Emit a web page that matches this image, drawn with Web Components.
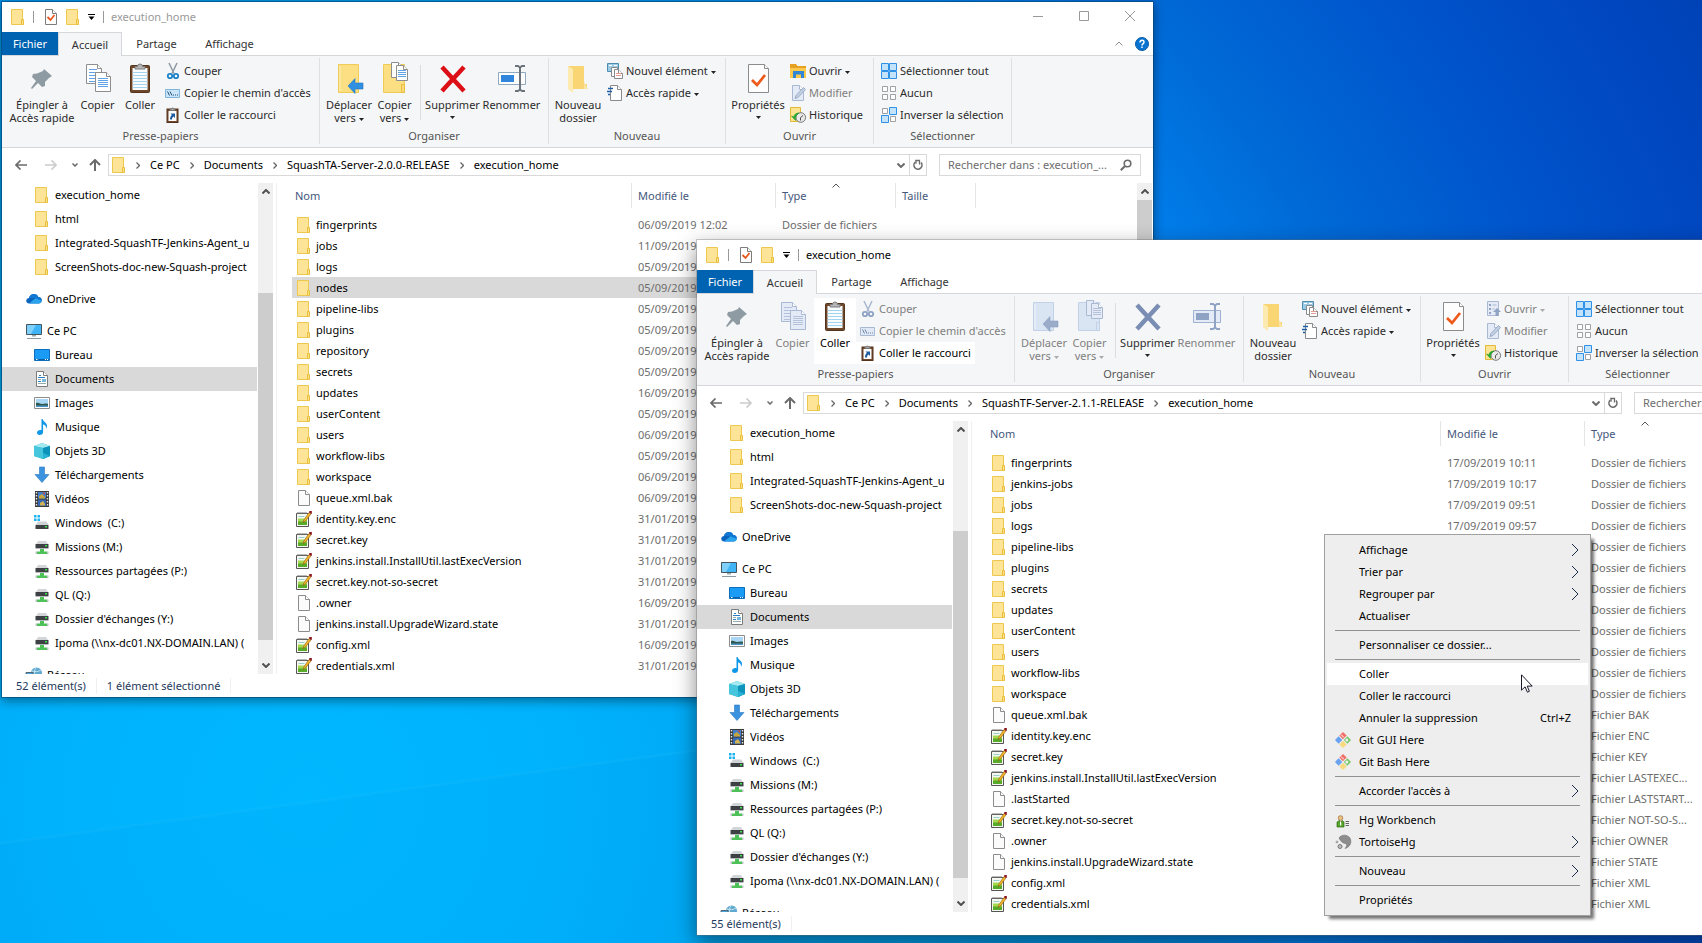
<!DOCTYPE html>
<html lang="fr">
<head>
<meta charset="utf-8">
<title>execution_home</title>
<style>
html, body { margin: 0; height: 100%; overflow: hidden; }
body { font: 11px/16px "Noto Sans", "Open Sans", sans-serif; color: #000; cursor: default; }
</style>
</head>
<body>
<desk-top>
  <explorer-window class="back" heading="execution_home">
    <ribbon-bar></ribbon-bar>
    <address-bar path="Ce PC|Documents|SquashTA-Server-2.0.0-RELEASE|execution_home"></address-bar>
    <nav-tree slot="side"></nav-tree>
    <file-list slot="main" folder="server200"></file-list>
    <status-bar slot="status"><span>52 élément(s)</span><span>1 élément sélectionné</span></status-bar>
  </explorer-window>
  <explorer-window class="front" heading="execution_home" active>
    <ribbon-bar clipboard></ribbon-bar>
    <address-bar path="Ce PC|Documents|SquashTF-Server-2.1.1-RELEASE|execution_home"></address-bar>
    <nav-tree slot="side"></nav-tree>
    <file-list slot="main" folder="server211" wide></file-list>
    <status-bar slot="status"><span>55 élément(s)</span></status-bar>
  </explorer-window>
  <context-menu>
    <menu-item more>Affichage</menu-item>
    <menu-item more>Trier par</menu-item>
    <menu-item more>Regrouper par</menu-item>
    <menu-item>Actualiser</menu-item>
    <hr>
    <menu-item>Personnaliser ce dossier...</menu-item>
    <hr>
    <menu-item hot>Coller</menu-item>
    <menu-item>Coller le raccourci</menu-item>
    <menu-item keys="Ctrl+Z">Annuler la suppression</menu-item>
    <menu-item icon="git">Git GUI Here</menu-item>
    <menu-item icon="git">Git Bash Here</menu-item>
    <hr>
    <menu-item more>Accorder l'accès à</menu-item>
    <hr>
    <menu-item icon="hg">Hg Workbench</menu-item>
    <menu-item icon="tortoise" more>TortoiseHg</menu-item>
    <hr>
    <menu-item more>Nouveau</menu-item>
    <hr>
    <menu-item>Propriétés</menu-item>
  </context-menu>
  <mouse-pointer></mouse-pointer>
</desk-top>

<script>
/* Registers an element whose shadow root is cloned from a template made of css and markup. */
function element(name, css, markup) {
  customElements.define(name, class extends HTMLElement {
    connectedCallback() {
      if (this.shadowRoot) return;
      const t = document.createElement('template');
      t.innerHTML = `<style>:host,*{box-sizing:border-box}button{font:inherit;color:inherit;background:none;border:0;padding:0;margin:0}${css}</style>` +
        (typeof markup === 'function' ? markup(this) : markup);
      this.attachShadow({ mode: 'open' }).append(t.content.cloneNode(true));
    }
  });
}

/* ---------- icons ---------- */
const page = (x, y, w, h, line, fill) =>
  `<path d="M${x + .5} ${y + .5}h${w - 5}l4 4v${h - 5}h${-(w - 1)}z" fill="${fill}" stroke="${line}"/><path d="M${x + w - 4.5} ${y + .5}v4h4" fill="#fff" stroke="${line}"/>`;
const lines = (x, y, w, n, step, c) =>
  `<path d="${Array.from({ length: n }, (_, i) => `M${x} ${y + i * step + .5}h${w}`).join('')}" stroke="${c}" fill="none"/>`;
const squares = (kinds) => kinds.split('').map((k, i) => {
  const x = (i % 2) * 8, y = (i >> 1) * 8;
  return k === '1'
    ? `<path d="M${x + .5} ${y + .5}h7v7h-7z" fill="#c3e3fc" stroke="#2f91e5"/>`
    : `<path d="M${x + 1.5} ${y + 1.5}h5v5h-5z" fill="#fff" stroke="#a0a0a0"/>`;
}).join('');
const clipboard = `<rect x="6.5" y="3.500" width="19" height="27" rx="1" fill="#6f472b" stroke="#54331c"/><path d="M8.500 6h15v22h-15z" fill="#fafdff"/>${lines(8.5, 10, 15, 6, 3, '#a3d4ee')}<path d="M11 7V4.500h2.500a2.500 2.500 0 0 1 5 0H21V7z" fill="#b6b6b6" stroke="#7d7d7d"/>`;
const netdrive = `<path d="M4 2h8l2 3H2z" fill="#d3d6d8"/><path d="M1.500 5h13v4h-13z" fill="#3d4144"/><path d="M11 6h2v1.500h-2z" fill="#3fe04a"/><path d="M1.500 9h13v1h-13z" fill="#b6babd"/><path d="M6 10h4v2.500h3V15H3v-2.500h3z" fill="#4ec258"/><path d="M1.500 12.500H3V15H1.500zM13 12.500h1.500V15H13z" fill="#bfc4c7"/>`;

const ICONS = {
  folder: () => `<path d="M1.500 .5h11v15h-11z" fill="#fee496" stroke="#ecc850"/><path d="M11.500 10.500h2v5h-2z" fill="#fde08a" stroke="#e8bf3c"/>`,
  check: () => page(2, 0, 12, 16, '#7c7c7c', '#fff') + `<path d="M4.500 8l3 3 4-5" fill="none" stroke="#e8571d" stroke-width="1.800"/>`,
  file: () => page(2, 0, 12, 16, '#8c8c8c', '#fbfbfb'),
  npp: () => `<path d="M.5 2.500h12V15.500H.5z" fill="#f4f8f1" stroke="#555"/><path d="M2 7.500h9V14H2z" fill="#a5d84c"/><path d="M2 10.500h9V14H2z" fill="#58ab28"/><path d="M2.500 5.500h6" stroke="#9cc"/><path d="M2 1v2M4 1v2M6 1v2M8 1v2M10 1v2" stroke="#777"/><path d="M7 11.500l.8-2.500 5.200-7.500 2 1.500-5.500 7z" fill="#f4b62a" stroke="#8a5a12" stroke-width=".6"/><path d="M13.300 0h2.500v3l-1-.2-1.700-1.300z" fill="#8b1620"/>`,
  cloud: () => `<path d="M3.500 12.500C1 12.500 0 11 .3 9.300.6 7.700 2 7 3 7c.6-2.500 2.600-4 5-4 2 0 3.600 1 4.300 3 2.200 0 3.500 1.500 3.500 3.300 0 2-1.300 3.200-3.200 3.200z" fill="#0a64bd"/><path d="M8 3c2 0 3.600 1 4.300 3 2.200 0 3.500 1.500 3.500 3.300L9 7 3 7c.6-2.500 2.600-4 5-4z" fill="#1277d3"/><path d="M3 12.500l6.500-5.300 6.300 2.500c-.2 1.700-1.400 2.800-3.200 2.800z" fill="#2aa4ec"/>`,
  pc: () => `<path d="M.5 1.500h15v10H.5z" fill="#3fb4f7" stroke="#45555f"/><path d="M1 2h9L5 11H1z" fill="#7fd0fb"/><path d="M6 12h4v1.500H6z" fill="#9aa"/><path d="M1 15.500h14" stroke="#8b9aa3"/>`,
  desktop: () => `<path d="M.5 2.500h15v11H.5z" fill="#1a9bf5" stroke="#0d6fbd"/><path d="M1 12.500h14" stroke="#0a5fa8"/><path d="M2 12.500h1.500M11 12.500h1M13 12.500h1" stroke="#fff"/>`,
  docs: () => page(2, 0, 12, 16, '#7c7c7c', '#fff') + `<path d="M5 4.500h2M4 6.500h7M9 8.500h3M4 10.500h3" stroke="#2d7fc4"/><path d="M8 8h4v3H8z" fill="#79b8dd"/><path d="M4 8.500h3M4 12.500h8" stroke="#9aa"/>`,
  images: () => `<path d="M.5 2.500h15v11H.5z" fill="#fff" stroke="#8c8c8c"/><path d="M2 4h12v8H2z" fill="#a8d6f4"/><path d="M2 8c3-1 4 1 6 1s4-1 6 0v3H2z" fill="#31584f"/><path d="M2 10.500h12V12H2z" fill="#4b93c4"/>`,
  music: () => `<path d="M7.500 0h1.200c.3 3 4.300 3.500 4.300 7 0 1.300-.5 2-1 2.700.3-2.700-1-3.700-2.900-4.500V13c0 1.700-1.500 3-3.500 3C3.900 16 3 15 3 13.800c0-1.600 1.500-2.800 3.300-2.800.5 0 .9.100 1.200.2z" fill="#0f97e8"/>`,
  cube: () => `<path d="M0 3l8-3 8 3v10l-7 3-9-3z" fill="#2bb5cf"/><path d="M0 3l8-3 8 3-7 2z" fill="#a6e8f0"/><path d="M0 3l9 2v11l-9-3z" fill="#46c6dc"/><path d="M9 5l7-2v10l-7 3z" fill="#0e93ba"/><path d="M9 10l7 3-7 3z" fill="#27b3d4"/>`,
  download: () => `<path d="M5.500 0h5v7.500H15L8 15.500 1 7.500h4.500z" fill="#3b93e0" stroke="#2a78c0" stroke-width=".6"/>`,
  video: () => `<path d="M1 0h14v16H1z" fill="#3b3b3b"/><path d="M2.500 1v15M13.500 1v15" stroke="#e6e6e6" stroke-width="1.400" stroke-dasharray="1.500 1.500"/><path d="M4 1h8v6.500H4z" fill="#3f7fd0"/><path d="M4 8.500h8V15H4z" fill="#3567b5"/><path d="M5 5l3-2 3 3v1.500H5z" fill="#caa53a"/><path d="M8 1.500h3V4z" fill="#c24d3a"/><path d="M6 12l3-2 2 3v1.500H6z" fill="#d3b450"/>`,
  windrive: () => `<path d="M0 0h2.500v2.500H0zM3.500 0H6v2.500H3.500zM0 3.500h2.500V6H0zM3.500 3.500H6V6H3.500z" fill="#18b3f0"/><path d="M4 6.500h8.500l2 3.500H1.500z" fill="#cfd3d6"/><path d="M1.500 10h13v4h-13z" fill="#3d4144"/><path d="M11 11h2v1.500h-2z" fill="#3fe04a"/>`,
  netdrive: () => netdrive,
  network: () => `<circle cx="10.500" cy="6" r="5.500" fill="#5fa9cf"/><path d="M10 1c-2 2-2 6-1 9M6 4c3 1 6 1 9-1" stroke="#c6e4f1" fill="none"/><path d="M0 5.500h7V12H0z" fill="#4aa3d8" stroke="#567"/>`,
  /* ribbon, 16 px */
  cut: o => { const b = o ? '#a9b7cf' : '#8d99a3', h = o ? '#8fa3c4' : '#1d84c8'; return `<path d="M4 0l5 10.500M12 0L7 10.500" stroke="${b}" stroke-width="1.500" fill="none"/><ellipse cx="5" cy="13" rx="2.200" ry="2.200" fill="none" stroke="${h}" stroke-width="1.800"/><ellipse cx="11" cy="13" rx="2.200" ry="2.200" fill="none" stroke="${h}" stroke-width="1.800"/>`; },
  path: o => `<path d="M.5 4.500h14v8H.5z" fill="${o ? '#dfe8f4' : '#cbe5f8'}" stroke="${o ? '#a9b9d4' : '#7fb5dc'}"/><path d="M2.500 6.500l2 4M5 6.500l2 4M8 10h1M10 10h1M12 10h1" stroke="${o ? '#7085ab' : '#23527c'}" fill="none"/>`,
  link: () => `<rect x="2" y="2" width="11" height="13.500" fill="#6f472b" stroke="#54331c"/><path d="M3.500 4H11.500V14h-8z" fill="#fff"/><path d="M5 3.500V2h1.500a1 1 0 0 1 2 0H10v1.500z" fill="#aaa" stroke="#777"/><path d="M5 12.500c0-2 .5-3.500 2-4.500L5.500 6.500H10V11L8.500 9.500C7.500 10.200 7 11 7 12.500z" fill="#1d5a9e"/>`,
  newitem: () => `<path d="M.5 .5h11v8H.5z" fill="#9ccbe6" stroke="#4f8cae"/><path d="M2 2.500h3M7 2.500h3" stroke="#fff"/><path d="M4.500 4.500h6v9h-6z" fill="#fff" stroke="#8a8a8a"/>` + page(7, 6, 9, 10, '#8a8a8a', '#fff') + lines(9, 10, 5, 2, 2, '#e59a92'),
  quick: () => page(3, 0, 12, 16, '#8a8a8a', '#fff') + `<path d="M1 3.500h5M0 6.500h5M1 9.500h2" stroke="#1d5fa8" stroke-width="1.500"/>`,
  openf: () => `<path d="M0 1h6l1.500 2H16v12H0z" fill="#e6a122"/><path d="M0 5h16v10H0z" fill="#fbc94b"/><path d="M3 8h11v7h-3v-3.500H6V15H3z" fill="#2f86d6"/>`,
  openlist: () => `<path d="M2.500 .5h11v14h-11z" fill="#e4ebf6" stroke="#a9b9d4"/><path d="M4 3h2v2H4zM4 7h2v2H4zM4 11h2v2H4z" fill="#8fa3c4"/><path d="M7.500 4h4M7.500 8h2" stroke="#a9b9d4"/><path d="M12 7l4 4h-2.500v4h-3v-4H8z" fill="#8fa3c4"/>`,
  edit: () => page(2, 0, 12, 16, '#a9b9d4', '#e4ebf6') + `<path d="M5 13.500l1-3 7.500-8 2 2-7.500 8z" fill="#c3cfe3" stroke="#9aacca"/>`,
  history: () => `<path d="M.5 .5h10v14H.5z" fill="#fee392" stroke="#e3b93a"/><circle cx="10.800" cy="10.500" r="4.800" fill="#e9e9e9" stroke="#777"/><path d="M10.500 10.500l2.500-2M10.500 10.500v3" stroke="#555"/><path d="M1.500 9l4 4.500v-2c0-2.500 1-4 3.500-5.500-3 0-5 1.500-5 4z" fill="#23b431" stroke="#128a20" stroke-width=".5"/>`,
  selall: () => squares('1111'),
  selnone: () => squares('0000'),
  selinv: () => squares('0110'),
  /* ribbon, 32 px */
  pin: () => `<path d="M18 7l8 7-3 2-4 4v4l-3 1-4-4-6 6-1-1 5-7-4-4 1-3 4-.5L17 9z" fill="#8f9ba3"/>`,
  copy: o => { const l = o ? '#a9b9d4' : '#8e8e8e', f = o ? '#e4ebf6' : '#fff', t = o ? '#b3c1da' : '#5fa3e6'; return page(4, 2, 16, 20, l, f) + lines(7, 7, 8, 5, 3, t) + page(13, 10, 16, 20, l, f) + lines(16, 16, 10, 5, 2, t); },
  paste: () => clipboard,
  moveto: o => `<path d="M5.500 2.500h20v28h-20z" fill="${o ? '#dae5f4' : '#fddf83'}" stroke="${o ? '#c2d1e8' : '#efcb58'}"/><path d="M7 4v25" stroke="${o ? '#edf3fb' : '#fff0bb'}"/><path d="M15 24l7-7.500v4.500h8v6h-8v4.500z" fill="${o ? '#9aacca' : '#2f8fe0'}" stroke="${o ? '#8fa3c4' : '#2377c2'}" stroke-width=".6"/>`,
  copyto: o => { const l = o ? '#a9b9d4' : '#8e8e8e', f = o ? '#e4ebf6' : '#fff', t = o ? '#b3c1da' : '#5fa3e6'; return `<path d="M4.500 2.500h21v28h-21z" fill="${o ? '#dae5f4' : '#fddf83'}" stroke="${o ? '#c2d1e8' : '#efcb58'}"/><path d="M22.500 22.500h3v8h-3z" fill="${o ? '#dae5f4' : '#fbd976'}" stroke="${o ? '#c2d1e8' : '#e8bf3c'}"/>` + page(12, 0, 12, 16, l, f) + page(17, 3, 12, 16, l, f) + lines(19, 8, 8, 4, 2, t); },
  del: o => `<path d="M5 5l22 24M27 5L5 29" stroke="${o ? '#7a8db3' : '#dc0f17'}" stroke-width="4.500"/>`,
  rename: o => `<path d="M2.500 10.500h27v12h-27z" fill="${o ? '#e4ebf6' : '#fdfdfd'}" stroke="${o ? '#9fb2d4' : '#8fa9c0'}"/><path d="M5 13h13v7H5z" fill="${o ? '#8fa3c4' : '#2f86dc'}"/><path d="M19 4h3l2 1.500L26 4h3M19 29h3l2-1.500 2 1.500h3M24 5v23" fill="none" stroke="${o ? '#8fa3c4' : '#6b747c'}" stroke-width="2"/>`,
  newfolder: () => `<path d="M6 4h16v18h3v5H11z" fill="#f9d573"/><path d="M22 20l4 7h-4z" fill="#fbe4a2"/><path d="M6 4l5 3v24l-5-4z" fill="#fdeab0"/>`,
  props: () => page(6, 2, 21, 29, '#8c8c8c', '#fdfdfd') + `<path d="M10 18l5 5 8-10" fill="none" stroke="#ee5a1c" stroke-width="2.800"/>`,
  /* context menu */
  git: () => `<g transform="rotate(45 8 8)"><path d="M2.300 2.300h5.200v5.200H2.300z" fill="#f0706a"/><path d="M8.500 2.300h5.200v5.200H8.500z" fill="#7bc86a"/><path d="M2.300 8.500h5.200v5.200H2.300z" fill="#6aa2f0"/><path d="M8.500 8.500h5.200v5.200H8.500z" fill="#f7da80"/></g><circle cx="11.800" cy="8" r="1.500" fill="#eee"/><path d="M6 2.500l3 3" stroke="#fff"/>`,
  hg: () => `<circle cx="5.500" cy="6" r="2.300" fill="#eac38c" stroke="#9c6d2a" stroke-width=".7"/><path d="M2 15v-5l2.500-1.500L5.500 11 7 8.500 9 10v5z" fill="#56a52c" stroke="#2e6b13" stroke-width=".7"/><path d="M5 10h1.200v3.500H5z" fill="#fff"/><path d="M10.500 9.500H14M10.500 11.500H14M10.500 13.500H14" stroke="#666"/>`,
  tortoise: () => `<path d="M4 4c2-3.500 8-4 11 0 2 4 .5 9-5 10.500 2-2 2-3.500 1-5C8 9.500 5.500 7.500 4 4z" fill="#8d8d8d" stroke="#6f6f6f" stroke-width=".6"/><circle cx="5" cy="12.500" r="2" fill="#bbb" stroke="#777"/><circle cx="2" cy="8" r="1" fill="#ccc" stroke="#888" stroke-width=".7"/>`,
};
element('fs-icon', `
:host{display:block;flex:none;width:16px;height:16px}
:host([big]){width:32px;height:32px}
svg{display:block;width:100%;height:100%;overflow:visible}`,
  e => `<svg viewBox="0 0 ${e.hasAttribute('big') ? '32 32' : '16 16'}" aria-hidden="true">${ICONS[e.getAttribute('name')](e.hasAttribute('off'))}</svg>`);

/* Line glyphs: chevrons, arrows, window controls. */
const GLYPHS = {
  down: [5, 3, '<path d="M0 0h5L2.500 3z" fill="currentColor"/>'],
  crumb: [4, 7, '<path d="M.5 .5l3 3-3 3" fill="none" stroke="currentColor" stroke-width="1.300"/>'],
  vee: [8, 5, '<path d="M.5 .5L4 4 7.500 .5" fill="none" stroke="currentColor" stroke-width="2"/>'],
  smallvee: [6, 4, '<path d="M.5 .5L3 3 5.500 .5" fill="none" stroke="currentColor" stroke-width="1.500"/>'],
  caret: [8, 5, '<path d="M.5 4.500L4 1l3.500 3.500" fill="none" stroke="currentColor"/>'],
  fatcaret: [8, 5, '<path d="M.5 4.500L4 1l3.500 3.500" fill="none" stroke="currentColor" stroke-width="2"/>'],
  left: [12, 10, '<path d="M5.500 .5L1 5l4.500 4.500M1 5h11" fill="none" stroke="currentColor" stroke-width="1.700"/>'],
  right: [12, 10, '<path d="M6.500 .5L11 5 6.500 9.500M11 5H0" fill="none" stroke="currentColor" stroke-width="1.700"/>'],
  up: [12, 12, '<path d="M1 6l5-5 5 5M6 1v11" fill="none" stroke="currentColor" stroke-width="2"/>'],
  reload: [10, 12, '<path d="M2.300 3.200A4 4 0 1 0 8 3.600" fill="none" stroke="currentColor" stroke-width="1.600"/><path d="M3 1v3.700M2.200 1.500H6.500V5.500" fill="none" stroke="currentColor" stroke-width="1.300"/>'],
  lens: [12, 12, '<circle cx="7.500" cy="4.500" r="3.300" fill="none" stroke="currentColor" stroke-width="1.600"/><path d="M5 7L.8 11.200" stroke="currentColor" stroke-width="2"/>'],
  min: [10, 10, '<path d="M0 5.500h10" stroke="currentColor"/>'],
  max: [10, 10, '<path d="M.5 .5h9v9h-9z" fill="none" stroke="currentColor"/>'],
  close: [10, 10, '<path d="M0 0l10 10M10 0L0 10" stroke="currentColor"/>'],
  more: [8, 14, '<path d="M1 1l6 6-6 6" fill="none" stroke="currentColor"/>'],
  bardown: [7, 6, '<path d="M0 .5h7" stroke="currentColor"/><path d="M.5 2.500h6l-3 3.500z" fill="currentColor"/>'],
};
const glyph = n => { const [w, h, p] = GLYPHS[n]; return `<svg class="g" width="${w}" height="${h}" viewBox="0 0 ${w} ${h}" aria-hidden="true">${p}</svg>`; };

/* ---------- desktop ---------- */
element('desk-top', `
:host{display:block;position:relative;height:100vh;overflow:hidden;
 background:radial-gradient(circle at 18% 85%,#00b8ff 0,#00b2fc 16%,#00a8f4 27%,#0093e2 50%,#007fec 63%,#006ad6 72%,#0054cc 84%,#0047c0 94%,#0042b6 100%)}
.ray{position:absolute;inset:0;width:100%;height:100%}
::slotted(explorer-window){position:absolute;width:calc(100vw - 549px);height:calc(100vh - 246px)}
::slotted(.back){left:1px;top:1px}
::slotted(.front){left:696px;top:239px}
::slotted(context-menu){position:absolute;left:1324px;top:534px}
::slotted(mouse-pointer){position:absolute;left:1521px;top:674px}`,
  `<svg class="ray" viewBox="0 0 1702 943" preserveAspectRatio="none" aria-hidden="true"><path d="M0 843L696 750V943H0z" fill="#0090d8" opacity=".06"/><path d="M0 842L696 749v3L0 845z" fill="#3cf" opacity=".12"/></svg><slot></slot>`);

element('explorer-window', `
:host{display:flex;flex-direction:column;border:1px solid rgba(0,60,100,.5);background:#fff;background-clip:padding-box;box-shadow:0 3px 10px rgba(0,0,0,.4)}
:host([active]){border-color:rgba(110,110,110,.35);box-shadow:0 8px 20px rgba(0,0,0,.45)}
header{flex:none;height:30px;display:flex;align-items:center;color:#999;padding-left:8px}
:host([active]) header{color:#000}
.bar{width:1px;height:12px;background:#999;margin:0 9px 0 7px}
.bar.end{margin:0 7px 0 8px}
fs-icon+fs-icon{margin-left:6px}
.pull{color:#000;margin-left:7px;display:flex;align-items:center;height:20px}
h1{font:inherit;margin:0;flex:1}
.ctl{width:46px;height:28px;display:grid;place-items:center;align-self:flex-start}
:host([active]) .ctl{color:#000}
main{flex:1;min-height:0;display:flex}
::slotted(nav-tree){flex:none}
::slotted(file-list){flex:1;min-width:0}`,
  e => `<header><fs-icon name="folder"></fs-icon><span class="bar"></span><fs-icon name="check"></fs-icon><fs-icon name="folder"></fs-icon><button class="pull" aria-label="Personnaliser">${glyph('bardown')}</button><span class="bar end"></span><h1>${e.getAttribute('heading')}</h1><button class="ctl" aria-label="Réduire">${glyph('min')}</button><button class="ctl" aria-label="Agrandir">${glyph('max')}</button><button class="ctl" aria-label="Fermer">${glyph('close')}</button></header><slot></slot><main><slot name="side"></slot><slot name="main"></slot></main><slot name="status"></slot>`);

/* ---------- ribbon ---------- */
element('ribbon-button', `
:host{display:block;flex:none}
button{display:flex;align-items:center;height:22px;padding:0 4px;gap:3px;white-space:nowrap;color:#2b2b2b;text-align:center}
:host([big]) button{flex-direction:column;width:100%;height:66px;padding:2px 0 0;gap:4px;line-height:13px}
:host([hot]) button{background:#fff;color:#000}
button:disabled{color:#808080}
.g{margin-left:3px;vertical-align:middle;color:#222}
button:disabled .g{color:#aaa}
:host([arrow=below]) .g{display:block;margin:5px auto 0}
b{font-weight:400}`,
  e => {
    const big = e.hasAttribute('big') ? 'big' : '', off = e.hasAttribute('off');
    return `<button ${off ? 'disabled' : ''}><fs-icon ${big} name="${e.getAttribute('icon')}" ${off || e.hasAttribute('dim') ? 'off' : ''}></fs-icon><b><slot></slot>${e.hasAttribute('arrow') ? glyph('down') : ''}</b></button>`;
  });

element('ribbon-group', `
:host{display:grid;grid-template-rows:68px 16px;row-gap:0;height:86px;margin-top:2px;padding-top:2px;border-right:1px solid #dfe0e2;flex:none}
div{display:flex;align-items:flex-start;padding-left:var(--lead,4px)}
footer{text-align:center;color:#555}`,
  e => `<div><slot></slot></div><footer>${e.getAttribute('label')}</footer>`);

element('ribbon-bar', `
:host{display:block;flex:none}
nav{display:flex;height:24px;border-bottom:1px solid #d5d7da}
nav button{height:24px;color:#333;display:block;text-align:center}
.file{width:56px;height:23px;background:#0063b1;color:#fff}
.on{width:64px;background:#f5f6f7;border:1px solid #d5d7da;border-bottom:0}
.t3{width:69px}.t4{width:77px}
.tools{margin-left:auto;display:flex;align-items:center;gap:12px;padding-right:4px;color:#8a8a8a}
.tools button{height:14px;display:grid;place-items:center;color:inherit}
.help{width:14px}
.strip{display:flex;height:92px;background:#f5f6f7;border-bottom:1px solid #d5d7da}
.col{display:flex;flex-direction:column;align-items:flex-start}
.line{width:1px;height:55px;margin:5px 4px 0 5px;background:#dcdde0}
.w68{width:68px}.w43{width:43px}.w42{width:42px}.w50{width:50px}.w41{width:41px}.w55{width:55px}.w63{width:63px}.w56{width:56px}
.g1{width:318px;--lead:6px}.g2{width:229px}.g3{width:177px}.g4{width:148px}.g5{width:138px;--lead:3px}`,
  e => {
    const c = e.hasAttribute('clipboard'), off = c ? 'off' : '', hot = c ? 'hot' : '';
    return `<nav><button class="file">Fichier</button><button class="on">Accueil</button><button class="t3">Partage</button><button class="t4">Affichage</button><span class="tools"><button aria-label="Réduire le ruban">${glyph('caret')}</button><button class="help" aria-label="Aide"><svg width="14" height="14" viewBox="0 0 14 14"><circle cx="7" cy="7" r="6.500" fill="#0873d0" stroke="#0a5ca8"/><path d="M5 5.500C5 4 6 3.300 7 3.300s2 .7 2 1.900c0 1.500-2 1.500-2 3.300M7 9.500V11" fill="none" stroke="#fff" stroke-width="1.500"/></svg></button></span></nav>
<div class="strip">
<ribbon-group class="g1" label="Presse-papiers">
 <ribbon-button big class="w68" icon="pin">Épingler à<br>Accès rapide</ribbon-button>
 <ribbon-button big class="w43" icon="copy" ${off}>Copier</ribbon-button>
 <ribbon-button big class="w42" icon="paste" ${hot}>Coller</ribbon-button>
 <span class="col"><ribbon-button icon="cut" ${off}>Couper</ribbon-button><ribbon-button icon="path" ${off}>Copier le chemin d'accès</ribbon-button><ribbon-button icon="link" ${hot}>Coller le raccourci</ribbon-button></span>
</ribbon-group>
<ribbon-group class="g2" label="Organiser">
 <ribbon-button big class="w50" icon="moveto" arrow ${off}>Déplacer<br>vers</ribbon-button>
 <ribbon-button big class="w41" icon="copyto" arrow ${off}>Copier<br>vers</ribbon-button>
 <span class="line"></span>
 <ribbon-button big class="w55" icon="del" arrow="below" ${c ? 'dim' : ''}>Supprimer</ribbon-button>
 <ribbon-button big class="w63" icon="rename" ${off}>Renommer</ribbon-button>
</ribbon-group>
<ribbon-group class="g3" label="Nouveau">
 <ribbon-button big class="w50" icon="newfolder">Nouveau<br>dossier</ribbon-button>
 <span class="col"><ribbon-button icon="newitem" arrow>Nouvel élément</ribbon-button><ribbon-button icon="quick" arrow>Accès rapide</ribbon-button></span>
</ribbon-group>
<ribbon-group class="g4" label="Ouvrir">
 <ribbon-button big class="w56" icon="props" arrow="below">Propriétés</ribbon-button>
 <span class="col"><ribbon-button icon="${c ? 'openlist' : 'openf'}" arrow ${off}>Ouvrir</ribbon-button><ribbon-button icon="edit" off>Modifier</ribbon-button><ribbon-button icon="history">Historique</ribbon-button></span>
</ribbon-group>
<ribbon-group class="g5" label="Sélectionner">
 <span class="col"><ribbon-button icon="selall">Sélectionner tout</ribbon-button><ribbon-button icon="selnone">Aucun</ribbon-button><ribbon-button icon="selinv">Inverser la sélection</ribbon-button></span>
</ribbon-group>
</div>`;
  });

/* ---------- address row ---------- */
element('address-bar', `
:host{display:flex;flex:none;height:35px;align-items:flex-start;padding:6px 12px 0 13px;color:#6b6b6b}
.nav{display:flex;align-items:center;height:22px;width:93px}
.nav button{display:grid;place-items:center;width:12px}
.nav .r{margin-left:18px;color:#ccc}
.nav .v{margin-left:12px}
.nav .u{margin-left:8px}
.path{flex:1;min-width:0;display:flex;align-items:center;height:22px;border:1px solid #d9d9d9;padding-left:2px;color:#000}
.path a{color:#000;text-decoration:none;white-space:nowrap}
.path i{width:24px;display:grid;place-items:center;color:#666}
fs-icon+i{margin-left:-1px}
.end{margin-left:auto;display:flex;height:20px;color:#6b6b6b}
.end button{width:17px;display:grid;place-items:center}
.end button:last-child{border-left:1px solid #d9d9d9}
label{display:flex;align-items:center;width:202px;height:22px;border:1px solid #d9d9d9;margin-left:12px;padding:0 8px}
input{flex:1;min-width:0;border:0;outline:0;padding:0;font:inherit;color:#6d6d6d;background:none}
input::placeholder{color:#6d6d6d;opacity:1}`,
  e => `<div class="nav"><button aria-label="Précédent">${glyph('left')}</button><button class="r" aria-label="Suivant">${glyph('right')}</button><button class="v" aria-label="Emplacements récents">${glyph('smallvee')}</button><button class="u" aria-label="Dossier parent">${glyph('up')}</button></div>
<div class="path"><fs-icon name="folder"></fs-icon>${e.getAttribute('path').split('|').map(p => `<i>${glyph('crumb')}</i><a href="#">${p}</a>`).join('')}<span class="end"><button aria-label="Historique des adresses">${glyph('vee')}</button><button aria-label="Actualiser">${glyph('reload')}</button></span></div>
<label aria-label="Rechercher"><input type="text" placeholder="Rechercher dans : execution_...">${glyph('lens')}</label>`);

/* ---------- panes ---------- */
element('scroll-bar', `
:host{display:flex;flex-direction:column;width:15px;flex:none;background:#f0f0f0}
button{height:17px;display:grid;place-items:center;color:#505050;flex:none}
.t{background:#cdcdcd}`,
  e => { const [a, b, c] = e.getAttribute('split').split(' '); return `<button tabindex="-1" aria-label="Haut">${glyph('fatcaret')}</button><span style="flex:${a}"></span><span class="t" style="flex:${b}"></span><span style="flex:${c}"></span><button tabindex="-1" aria-label="Bas">${glyph('vee')}</button>`; });

const PLACES = [
  [2, 'folder', 'execution_home'], [2, 'folder', 'html'], [2, 'folder', 'Integrated-SquashTF-Jenkins-Agent_u'], [2, 'folder', 'ScreenShots-doc-new-Squash-project'],
  [1, 'cloud', 'OneDrive'], [1, 'pc', 'Ce PC'], [2, 'desktop', 'Bureau'], [2, 'docs', 'Documents'], [2, 'images', 'Images'], [2, 'music', 'Musique'],
  [2, 'cube', 'Objets 3D'], [2, 'download', 'Téléchargements'], [2, 'video', 'Vidéos'], [2, 'windrive', 'Windows  (C:)'], [2, 'netdrive', 'Missions (M:)'],
  [2, 'netdrive', 'Ressources partagées (P:)'], [2, 'netdrive', 'QL (Q:)'], [2, 'netdrive', "Dossier d'échanges (Y:)"], [2, 'netdrive', 'Ipoma (\\\\nx-dc01.NX-DOMAIN.LAN) ('],
  [1, 'network', 'Réseau'],
];
element('nav-tree', `
:host{display:flex;width:275px;border-right:1px solid #f0f0f0}
nav{width:256px;overflow:hidden;padding-right:1px}
a{display:flex;align-items:center;gap:5px;height:24px;padding-left:32px;white-space:pre;color:#000;text-decoration:none;overflow:hidden}
a.l1{margin-top:8px;padding-left:24px}
a.on{background:#d9d9d9}`,
  () => `<nav>${PLACES.map(([l, i, t]) => `<a href="#" class="l${l}${t === 'Documents' ? ' on' : ''}"><fs-icon name="${i}"></fs-icon>${t}</a>`).join('')}</nav><scroll-bar split="93 347 17"></scroll-bar>`);

const D = 'Dossier de fichiers';
const FOLDERS = {
  server200: [
    ['folder', 'fingerprints', '06/09/2019 12:02', D], ['folder', 'jobs', '11/09/2019'], ['folder', 'logs', '05/09/2019'], ['folder', 'nodes', '05/09/2019', '', 1],
    ['folder', 'pipeline-libs', '05/09/2019'], ['folder', 'plugins', '05/09/2019'], ['folder', 'repository', '05/09/2019'], ['folder', 'secrets', '05/09/2019'],
    ['folder', 'updates', '16/09/2019'], ['folder', 'userContent', '05/09/2019'], ['folder', 'users', '06/09/2019'], ['folder', 'workflow-libs', '05/09/2019'],
    ['folder', 'workspace', '06/09/2019'], ['file', 'queue.xml.bak', '06/09/2019'], ['npp', 'identity.key.enc', '31/01/2019'], ['npp', 'secret.key', '31/01/2019'],
    ['npp', 'jenkins.install.InstallUtil.lastExecVersion', '31/01/2019'], ['npp', 'secret.key.not-so-secret', '31/01/2019'], ['file', '.owner', '16/09/2019'],
    ['file', 'jenkins.install.UpgradeWizard.state', '31/01/2019'], ['npp', 'config.xml', '16/09/2019'], ['npp', 'credentials.xml', '31/01/2019'],
  ],
  server211: [
    ['folder', 'fingerprints', '17/09/2019 10:11', D], ['folder', 'jenkins-jobs', '17/09/2019 10:17', D], ['folder', 'jobs', '17/09/2019 09:51', D], ['folder', 'logs', '17/09/2019 09:57', D],
    ...['pipeline-libs', 'plugins', 'secrets', 'updates', 'userContent', 'users', 'workflow-libs', 'workspace'].map(n => ['folder', n, '', D]),
    ['file', 'queue.xml.bak', '', 'Fichier BAK'], ['npp', 'identity.key.enc', '', 'Fichier ENC'], ['npp', 'secret.key', '', 'Fichier KEY'],
    ['npp', 'jenkins.install.InstallUtil.lastExecVersion', '', 'Fichier LASTEXEC...'], ['file', '.lastStarted', '', 'Fichier LASTSTART...'],
    ['npp', 'secret.key.not-so-secret', '', 'Fichier NOT-SO-S...'], ['file', '.owner', '', 'Fichier OWNER'], ['file', 'jenkins.install.UpgradeWizard.state', '', 'Fichier STATE'],
    ['npp', 'config.xml', '', 'Fichier XML'], ['npp', 'credentials.xml', '', 'Fichier XML'],
  ],
};
element('file-list', `
:host{display:flex;overflow:hidden;padding-right:1px}
.pane{flex:1;min-width:0;overflow:hidden;padding-left:15px}
table{border-collapse:separate;border-spacing:0;table-layout:fixed;width:684px}
:host([wide]) table{width:798px}
.n{width:340px}:host([wide]) .n{width:454px}
.d{width:144px}.k{width:120px}.s{width:80px}
th{font-weight:400;text-align:left;color:#44577c;height:25px;padding:0 0 0 6px;border-right:1px solid #e5e5e5;position:relative}
th:first-child{padding-left:3px}
th .g{position:absolute;left:calc(50% - 4px);top:0;color:#555}
thead::after{content:"";display:block;height:6px}
td{height:21px;padding:0 0 0 6px;color:#6d6d6d;white-space:nowrap;overflow:hidden}
td:first-child{padding-left:4px;color:#000}
td div{display:flex;align-items:center;gap:4px}
tr.on td{background:#d9d9d9}`,
  e => `<div class="pane"><table><colgroup><col class="n"><col class="d"><col class="k"><col class="s"></colgroup><thead><tr><th>Nom</th><th>Modifié le</th><th>Type${glyph('caret')}</th><th>Taille</th></tr></thead><tbody>${
    FOLDERS[e.getAttribute('folder')].map(([i, n, d = '', k = '', on]) => `<tr${on ? ' class="on"' : ''}><td><div><fs-icon name="${i}"></fs-icon>${n}</div></td><td>${d}</td><td>${k}</td><td></td></tr>`).join('')}</tbody></table></div><scroll-bar split="0 400 57"></scroll-bar>`);

element('status-bar', `
:host{display:flex;align-items:center;flex:none;height:23px;padding-left:4px;color:#1e395b}
::slotted(span){padding:0 10px;border-right:1px solid #f0f0f0;line-height:16px}`, `<slot></slot>`);

/* ---------- context menu ---------- */
element('context-menu', `
:host{display:block;width:267px;padding:4px 2px;background:#eee;border:1px solid #a0a0a0;box-shadow:4px 4px 3px -1px rgba(0,0,0,.55)}
::slotted(hr){height:1px;margin:3px 8px;border:0;background:#919191}`, `<slot></slot>`);
element('menu-item', `
:host{display:block}
button{display:flex;align-items:center;width:100%;height:22px;padding:0 9px 0 8px;text-align:left;color:#000}
:host([hot]) button{background:#fff}
.i{width:16px;margin-right:8px}
.l{flex:1}
.k{margin-right:8px}
.g{color:#1c2b4a}`,
  e => `<button role="menuitem"><span class="i">${e.hasAttribute('icon') ? `<fs-icon name="${e.getAttribute('icon')}"></fs-icon>` : ''}</span><span class="l"><slot></slot></span>${e.hasAttribute('keys') ? `<span class="k">${e.getAttribute('keys')}</span>` : ''}${e.hasAttribute('more') ? glyph('more') : ''}</button>`);

element('mouse-pointer', `:host{display:block;width:12px;height:19px;pointer-events:none}svg{display:block}`,
  `<svg width="12" height="19" viewBox="0 0 12 19" aria-hidden="true"><path d="M.5 .8v15.400l3.600-3.400 2.300 5.400 2-.9-2.200-5.200h5z" fill="#fff" stroke="#1a1a2a"/></svg>`);
</script>
</body>
</html>
